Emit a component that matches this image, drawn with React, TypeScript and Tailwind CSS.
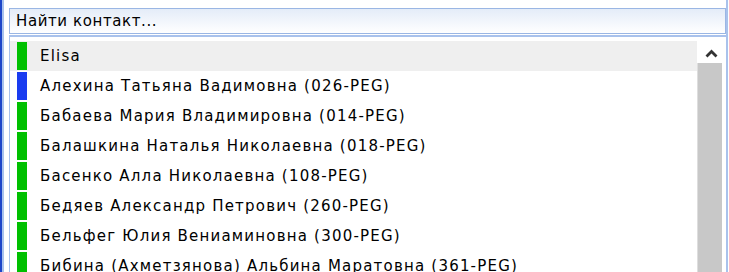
const contacts = [
  { name: "Elisa", color: "bg-[#00c000]", active: true },
  { name: "Алехина Татьяна Вадимовна (026-PEG)", color: "bg-[#1a3cf0]" },
  { name: "Бабаева Мария Владимировна (014-PEG)", color: "bg-[#00c000]" },
  { name: "Балашкина Наталья Николаевна (018-PEG)", color: "bg-[#00c000]" },
  { name: "Басенко Алла Николаевна (108-PEG)", color: "bg-[#00c000]" },
  { name: "Бедяев Александр Петрович (260-PEG)", color: "bg-[#00c000]" },
  { name: "Бельфег Юлия Вениаминовна (300-PEG)", color: "bg-[#00c000]" },
  { name: "Бибина (Ахметзянова) Альбина Маратовна (361-PEG)", color: "bg-[#00c000]" },
];

export default function App() {
  return (
    <div className="flex h-[272px] w-[729px] overflow-hidden bg-white font-['DejaVu_Sans',Verdana,sans-serif] text-[15px] tracking-[1.2px] text-black">
      <div className="w-[2px] shrink-0 bg-[#1e46c8]" />
      <div className="w-[2px] shrink-0 bg-[#a9c2ec]" />
      <div className="flex min-w-0 flex-1 flex-col pl-[5px] pt-[8px]">
        <div className="flex h-[26px] items-center border border-[#9ab6e4] bg-gradient-to-b from-[#e4ecf8] to-white pl-[6px] tracking-[0.6px]">
          Найти контакт...
        </div>
        <div className="mt-px flex min-h-0 flex-1 border-l border-t-2 border-[#a9c2ec]">
          <div className="min-w-0 flex-1 pt-[4px]">
            {contacts.map((c) => (
              <div
                key={c.name}
                className={`flex h-[30px] items-center pl-[7px] ${c.active ? "bg-[#efefef]" : ""}`}
              >
                <div className={`h-[28px] w-[10px] shrink-0 ${c.color}`} />
                <span className="ml-[13px] whitespace-nowrap">{c.name}</span>
              </div>
            ))}
          </div>
          <div className="flex w-[25px] shrink-0 flex-col pt-[4px]">
            <div className="flex h-[22px] items-center justify-center pl-[3px] pt-[2px]">
              <svg width="13" height="9" viewBox="0 0 13 9">
                <path d="M1.5 7.5 L6.5 2.5 L11.5 7.5" fill="none" stroke="#333" strokeWidth="2.8" />
              </svg>
            </div>
            <div className="flex-1 border-l border-[#dedede] bg-[#c8c8c8]" />
          </div>
          <div className="w-[4px] shrink-0 bg-white" />
        </div>
      </div>
      <div className="w-[2px] shrink-0 bg-[#a9c2ec]" />
      <div className="w-px shrink-0 bg-white" />
    </div>
  );
}
